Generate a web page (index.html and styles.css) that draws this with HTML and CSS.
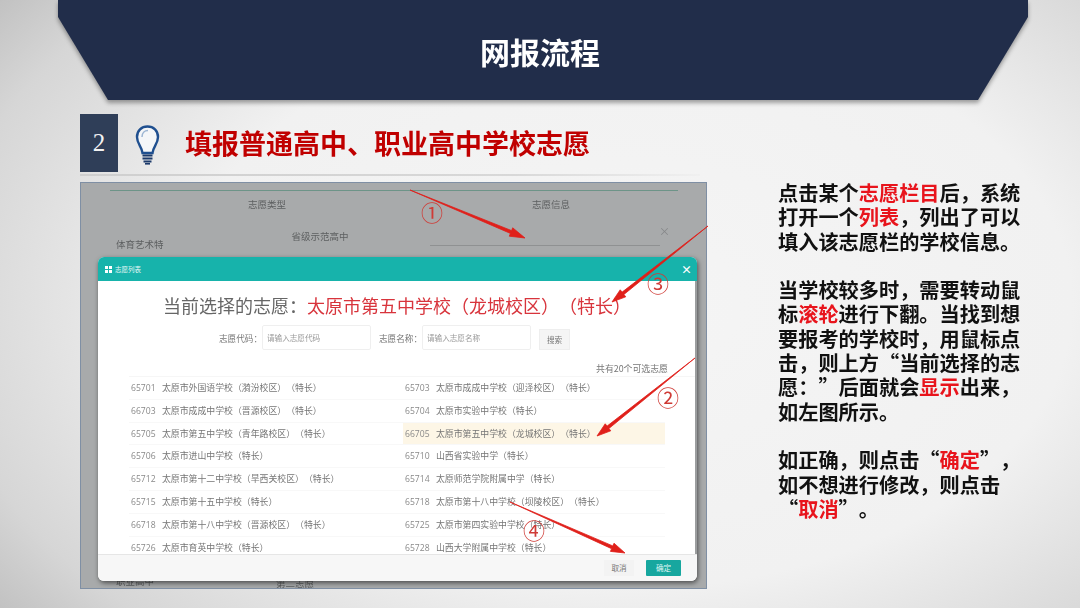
FILE: index.html
```html
<!DOCTYPE html>
<html lang="zh-CN">
<head>
    <meta charset="UTF-8">
    <title>网报流程</title>
    <link rel="stylesheet" href="styles.css">
</head>
<body>
    <div class="slide">
        <div class="banner-wrap">
            <header class="banner">网报流程</header>
        </div>

        <div class="step">
            <div class="step-num">2</div>
            <svg class="bulb" viewBox="0 0 25 40" width="25" height="40">
                <path d="M7.5 28 C7 22 2 19 2 12 C2 5.5 6.5 1.5 12.5 1.5 C18.5 1.5 23 5.5 23 12 C23 19 18 22 17.500 28 Z" fill="#f4f6f8" stroke="#1f4f8f" stroke-width="2.400"/>
                <path d="M7 12 C7 8 9.500 5.500 13 5.500" fill="none" stroke="#9db6d3" stroke-width="1.500"/>
                <path d="M7.500 30.500 H17.500 M7.500 33.500 H17.500 M8.500 36.500 H16.500" stroke="#1c3a6b" stroke-width="2.200"/>
                <path d="M10 38.800 H15" stroke="#1c3a6b" stroke-width="1.600"/>
            </svg>
            <h2 class="step-title">填报普通高中、职业高中学校志愿</h2>
        </div>
        <div class="step-rule"></div>

        <div class="content">
            <div class="shot">
                <div class="bg-table">
                    <div class="bg-head">
                        <span>志愿类型</span>
                        <span>志愿信息</span>
                    </div>
                    <div class="bg-row">
                        <span class="bg-side">体育艺术特</span>
                        <span class="bg-school">省级示范高中</span>
                        <span class="bg-field"><i>×</i></span>
                    </div>
                    <div class="bg-foot">
                        <span>职业高中</span>
                        <span class="bg-second">第二志愿</span>
                    </div>
                </div>

                <div class="modal">
                    <div class="modal-head">
                        <span class="modal-caption"><i class="grid-icon"></i>志愿列表</span>
                        <span class="modal-close">×</span>
                    </div>
                    <div class="modal-body">
                        <div class="current">当前选择的志愿：<em>太原市第五中学校（龙城校区）（特长）</em></div>
                        <div class="search">
                            <label>志愿代码：</label>
                            <div class="input">请输入志愿代码</div>
                            <label>志愿名称：</label>
                            <div class="input">请输入志愿名称</div>
                            <div class="btn-search">搜索</div>
                        </div>
                        <div class="count">共有20个可选志愿</div>
                        <div class="list">
                            <div class="row"><b>65701</b>太原市外国语学校（漪汾校区）（特长）</div>
                            <div class="row"><b>65703</b>太原市成成中学校（迎泽校区）（特长）</div>
                            <div class="row"><b>66703</b>太原市成成中学校（晋源校区）（特长）</div>
                            <div class="row"><b>65704</b>太原市实验中学校（特长）</div>
                            <div class="row"><b>65705</b>太原市第五中学校（青年路校区）（特长）</div>
                            <div class="row active"><b>66705</b>太原市第五中学校（龙城校区）（特长）</div>
                            <div class="row"><b>65706</b>太原市进山中学校（特长）</div>
                            <div class="row"><b>65710</b>山西省实验中学（特长）</div>
                            <div class="row"><b>65712</b>太原市第十二中学校（旱西关校区）（特长）</div>
                            <div class="row"><b>65714</b>太原师范学院附属中学（特长）</div>
                            <div class="row"><b>65715</b>太原市第十五中学校（特长）</div>
                            <div class="row"><b>65718</b>太原市第十八中学校（坝陵校区）（特长）</div>
                            <div class="row"><b>66718</b>太原市第十八中学校（晋源校区）（特长）</div>
                            <div class="row"><b>65725</b>太原市第四实验中学校（特长）</div>
                            <div class="row"><b>65726</b>太原市育英中学校（特长）</div>
                            <div class="row"><b>65728</b>山西大学附属中学校（特长）</div>
                        </div>
                    </div>
                    <div class="modal-foot">
                        <div class="btn-cancel">取消</div>
                        <div class="btn-ok">确定</div>
                    </div>
                </div>
            </div>

            <div class="notes">
                <p>点击某个<em>志愿栏目</em>后，系统<br>打开一个<em>列表</em>，列出了可以<br>填入该志愿栏的学校信息。</p>
                <p>当学校较多时，需要转动鼠<br>标<em>滚轮</em>进行下翻。当找到想<br>要报考的学校时，用鼠标点<br>击，则上方“当前选择的志<br>愿：”后面就会<em>显示</em>出来，<br>如左图所示。</p>
                <p>如正确，则点击“<em>确定</em>”，<br>如不想进行修改，则点击<br>“<em>取消</em>”。</p>
            </div>
        </div>

        <!-- red arrows drawn on top of the screenshot -->
        <svg class="arrows" viewBox="0 0 1080 608" width="1080" height="608">
            <polygon points="410,190 510.4,233.4 509.3,236.2 525,238 512.7,227.8 511.6,230.6"/>
            <polygon points="708,226 623.9,294.500 625.800,296.800 612,302 620.200,289.800 622.100,292.100"/>
            <polygon points="695,358 608.900,428.500 610.800,430.800 597,436 605.200,423.800 607.100,426.100"/>
            <polygon points="510,502 611.600,548.700 610.400,551.400 625,553 614,543.200 612.800,545.900"/>
        </svg>
        <span class="mark mark-1">①</span>
        <span class="mark mark-2">②</span>
        <span class="mark mark-3">③</span>
        <span class="mark mark-4">④</span>
    </div>
</body>
</html>
```

FILE: styles.css
```css
* {
    margin: 0;
    padding: 0;
    box-sizing: border-box;
}

body {
    font-family: "Noto Sans CJK SC", "Liberation Sans", sans-serif;
    background: #e8e8e8;
    text-spacing-trim: space-all;
}

.slide {
    position: relative;
    width: 1080px;
    height: 608px;
    overflow: hidden;
    background: radial-gradient(ellipse 75% 85% at 58% 50%, #f5f5f5 0%, #f1f1f1 55%, #d6d6d6 85%, #bdbdbd 100%);
    filter: blur(0.4px);
}

.banner-wrap {
    margin-left: 58px;
    width: 970px;
    filter: drop-shadow(0 3px 2px rgba(0, 0, 0, 0.35));
}

.banner {
    height: 100px;
    padding: 29px 6px 0 0;
    background: #212d4a;
    clip-path: polygon(0 0, 100% 0, 100% 17px, calc(100% - 50px) 100%, 50px 100%, 0 17px);
    color: #fff;
    font-size: 30px;
    font-weight: 700;
    line-height: 44px;
    text-align: center;
}

.step {
    display: flex;
    align-items: center;
    height: 58px;
    margin: 14px 0 0 80px;
}

.step-num {
    width: 38px;
    height: 58px;
    background: #2f3e58;
    color: #f2f2f2;
    font-family: "Liberation Serif", serif;
    font-size: 25px;
    line-height: 58px;
    text-align: center;
}

.bulb {
    margin-left: 17px;
    margin-top: 4px;
}

.step-title {
    margin-left: 25px;
    color: #c00000;
    font-size: 27px;
    font-weight: 700;
    line-height: 40px;
    white-space: nowrap;
}

.step-rule {
    height: 2px;
    margin: 2px 380px 6px 80px;
    background: linear-gradient(90deg, #cfcfcf, #d8d8d8 70%, #f0f0f0);
}

.content {
    display: flex;
    gap: 71px;
    margin-left: 80px;
}

/* screenshot of the system */
.shot {
    position: relative;
    width: 627px;
    height: 407px;
    flex: none;
    border: 1px solid #7f8fa4;
    background: #a8aaab;
    overflow: hidden;
}

.bg-table {
    display: flex;
    flex-direction: column;
    height: 100%;
    padding: 7px 28px 0 29px;
    color: #5d5f60;
    font-size: 9.5px;
}

.bg-head {
    display: grid;
    grid-template-columns: 314px 254px;
    height: 28px;
    border-top: 1px solid #6d9488;
    line-height: 27px;
    text-align: center;
}

.bg-row {
    display: grid;
    grid-template-columns: 100px 220px 230px;
    height: 32px;
}

.bg-side {
    padding: 19px 0 0 6px;
}

.bg-school {
    padding-top: 11px;
    text-align: center;
}

.bg-field {
    position: relative;
    border-bottom: 1px solid #8f9192;
    height: 28px;
}

.bg-field i {
    position: absolute;
    right: -10px;
    top: 8px;
    color: #858788;
    font-style: normal;
    font-size: 11px;
    line-height: 11px;
}

.bg-foot {
    display: flex;
    align-items: flex-start;
    gap: 122px;
    margin-top: auto;
    padding-left: 6px;
    height: 12px;
    line-height: 10px;
}

.bg-second {
    margin-top: 2px;
}

/* dialog */
.modal {
    position: absolute;
    left: 17px;
    top: 74px;
    display: flex;
    flex-direction: column;
    width: 599px;
    height: 324px;
    background: #fff;
    border-radius: 6px;
    box-shadow: 1px 2px 5px rgba(0, 0, 0, 0.55);
    overflow: hidden;
}

.modal-head {
    display: flex;
    align-items: center;
    justify-content: space-between;
    flex: none;
    height: 24px;
    padding: 0 5px 0 7px;
    background: #17b3ab;
    color: #e6f7f6;
    font-size: 6.5px;
}

.modal-caption {
    display: flex;
    align-items: center;
    gap: 3px;
}

.grid-icon {
    width: 7px;
    height: 7px;
    background:
        linear-gradient(#fff, #fff) 0 0 / 3px 3px no-repeat,
        linear-gradient(#fff, #fff) 100% 0 / 3px 3px no-repeat,
        linear-gradient(#fff, #fff) 0 100% / 3px 3px no-repeat,
        linear-gradient(#fff, #fff) 100% 100% / 3px 3px no-repeat;
}

.modal-close {
    color: #fff;
    font-size: 11px;
    font-weight: 700;
}

.modal-body {
    flex: 1;
    min-height: 0;
    overflow: hidden;
    padding-left: 31px;
    border-right: 2px solid #9c9e9f;
}

.current {
    margin: 13px 0 0 34px;
    color: #666;
    font-size: 18px;
    line-height: 22px;
    white-space: nowrap;
}

.current em {
    color: #d8343c;
    font-style: normal;
}

.search {
    display: flex;
    align-items: center;
    height: 25px;
    margin: 9px 0 0 90px;
    color: #777;
    font-size: 8.6px;
}

.search label {
    width: 43px;
    white-space: nowrap;
}

.input {
    width: 109px;
    height: 25px;
    margin-right: 8px;
    padding-left: 4px;
    border: 1px solid #efefef;
    border-radius: 2px;
    color: #999;
    font-size: 7.6px;
    line-height: 23px;
}

.btn-search {
    width: 31px;
    height: 21px;
    margin-top: 4px;
    background: #f5f5f5;
    border: 1px solid #eee;
    color: #777;
    font-size: 7.6px;
    line-height: 19px;
    text-align: center;
}

.count {
    width: 539px;
    margin-top: 13px;
    color: #777;
    font-size: 8.9px;
    line-height: 12px;
    text-align: right;
}

.list {
    display: grid;
    grid-template-columns: 274px 262px;
    margin-top: 1px;
    border-top: 1px solid #f6f6f6;
}

.row {
    height: 22.8px;
    padding-left: 2px;
    border-bottom: 1px solid #f8f8f8;
    color: #757575;
    font-size: 8.9px;
    line-height: 22px;
    white-space: nowrap;
}

.row b {
    display: inline-block;
    width: 31px;
    color: #8a8a8a;
    font-family: "Open Sans", sans-serif;
    font-size: 8.6px;
    font-weight: 400;
}

.row.active {
    background: #fdf6e6;
}

.modal-foot {
    display: flex;
    align-items: center;
    justify-content: flex-end;
    gap: 12px;
    flex: none;
    height: 27px;
    padding-right: 16px;
    background: #f7f7f7;
    border-top: 1px solid #e6e6e6;
}

.btn-cancel,
.btn-ok {
    height: 16px;
    font-size: 7.6px;
    line-height: 16px;
    text-align: center;
}

.btn-cancel {
    width: 30px;
    background: #f3f3f3;
    color: #777;
}

.btn-ok {
    width: 35px;
    background: #17a79f;
    border-radius: 1px;
    color: #dff5f3;
}

/* text on the right */
.notes {
    width: 250px;
    margin-top: -1px;
    color: #111;
    font-size: 20.2px;
    font-weight: 700;
    line-height: 24.3px;
    white-space: nowrap;
}

.notes p {
    margin-bottom: 24.3px;
}

.notes em {
    color: #e8141c;
    font-style: normal;
}

/* arrows and numbers over the screenshot */
.arrows {
    position: absolute;
    left: 0;
    top: 0;
}

.arrows polygon {
    fill: #e0201a;
    stroke: #e0201a;
    stroke-width: 0.8;
}

.mark {
    position: absolute;
    color: #cf3b36;
    font-size: 22px;
    line-height: 24px;
}

.mark-1 { left: 421px; top: 199px; }
.mark-2 { left: 657px; top: 384px; }
.mark-3 { left: 647px; top: 270px; }
.mark-4 { left: 523px; top: 517px; }
```
